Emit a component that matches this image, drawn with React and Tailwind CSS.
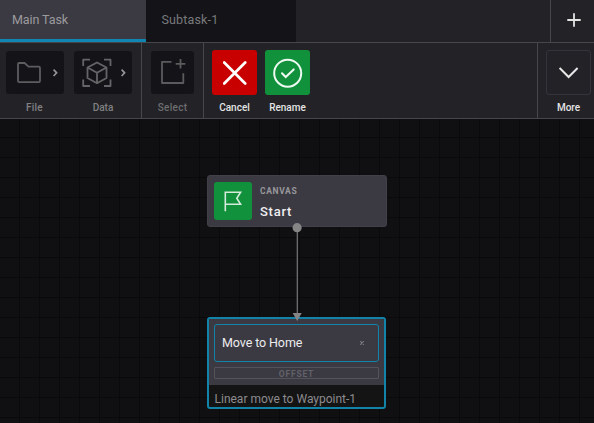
import React from "react";

function Label({ children, className = "mt-[8px]" }) {
  return <span className={`block whitespace-nowrap text-center text-[10px] leading-[12px] font-medium ${className}`}>{children}</span>;
}

function Chevron() {
  return (
    <svg width="6" height="9" viewBox="0 0 6 9" fill="none" stroke="#949497" strokeWidth="1.7">
      <path d="M.6 1.6l3 3.2L.6 8" />
    </svg>
  );
}

function FolderIcon() {
  return (
    <svg width="24" height="22" viewBox="0 0 24 22" fill="none" stroke="#5d5d60" strokeWidth="1.8" strokeLinejoin="round">
      <path d="M1 19V2.2Q1 1 2.2 1H7.6L11.5 4.7H21.8Q23 4.7 23 5.9V19Q23 20.2 21.8 20.2H2.2Q1 20.2 1 19Z" />
    </svg>
  );
}

function DataIcon() {
  return (
    <svg width="30" height="30" viewBox="0 0 30 30" fill="none" stroke="#656568" strokeWidth="1.8" strokeLinejoin="round">
      <path d="M1.2 8V1.7H8M22 1.7H28.5V8M28.5 21.5V28H22M8 28H1.2V21.5" />
      <path d="M15 4.5L24.5 9.5V20L15 25.2L5.5 20V9.5ZM5.5 9.5L15 14.8L24.5 9.5M15 14.8V25.2" />
    </svg>
  );
}

function SelectIcon() {
  return (
    <svg width="27" height="27" viewBox="0 0 27 27" fill="none" stroke="#5b5b5e" strokeWidth="1.8" strokeLinejoin="round">
      <path d="M12.5 3.9H3V25H24.3V15.2M21.5 1V10.6M16.7 5.8H26.3" />
    </svg>
  );
}

function Tabs() {
  return (
    <div className="flex h-[43px] border-b border-[#47474b] bg-[#232327] text-[12.5px] leading-[38px]">
      <div className="w-[146px] border-b-[3px] border-[#1086b3] bg-[#3b3a42] pt-[1px] pl-3 tracking-[-0.1px] text-[#9b9b9f]">Main Task</div>
      <div className="w-[150px] bg-[#141418] pt-[1px] pl-[15.5px] tracking-[0.15px] text-[#79797c]">Subtask-1</div>
      <div className="ml-auto flex w-[44px] items-center justify-center border-l border-[#47474b] pl-[3px] pb-[3px]">
        <svg width="14" height="14" viewBox="0 0 14 14" stroke="#e4e4e5" strokeWidth="1.8">
          <path d="M7 .3V13.7M.3 7H13.7" />
        </svg>
      </div>
    </div>
  );
}

function Toolbar() {
  return (
    <div className="flex h-[76px] border-b border-[#47474b] bg-[#232327]">
      <div className="flex w-[142px] gap-[10px] border-r border-[#47474b] pt-2 pl-[6px] text-[#808083]">
        <div className="w-[58px]">
          <div className="flex h-[43px] items-center rounded-[3px] bg-[#141418] pl-[10.5px]">
            <FolderIcon />
            <span className="ml-[12px]"><Chevron /></span>
          </div>
          <Label className="mt-[8px] -ml-px tracking-[0.2px]">File</Label>
        </div>
        <div className="w-[58px]">
          <div className="flex h-[43px] items-center rounded-[3px] bg-[#141418] pl-[7.5px]">
            <DataIcon />
            <span className="ml-[9px]"><Chevron /></span>
          </div>
          <Label>Data</Label>
        </div>
      </div>
      <div className="w-[62px] border-r border-[#47474b] pt-2 pl-[9px] text-[#6d6d70]">
        <div className="w-[43px]">
          <div className="flex h-[43px] items-center justify-center rounded-[3px] bg-[#141418] pb-[2px]">
            <SelectIcon />
          </div>
          <Label className="mt-[8px] tracking-[0.3px]">Select</Label>
        </div>
      </div>
      <div className="flex gap-[8px] pt-[7px] pl-[8px] text-[#e4e4e5]">
        <div className="w-[45px]">
          <div className="flex h-[45px] items-center justify-center rounded-[3px] bg-[#c90000]">
            <svg width="24" height="24" viewBox="0 0 24 24" stroke="#fff" strokeWidth="2.7" strokeLinecap="round">
              <path d="M1.2 1.5L22.2 22.5M22.2 1.5L1.2 22.5" />
            </svg>
          </div>
          <Label className="mt-[7px]">Cancel</Label>
        </div>
        <div className="w-[45px]">
          <div className="flex h-[45px] items-center justify-center rounded-[3px] bg-[#12913d]">
            <svg width="30" height="30" viewBox="0 0 30 30" fill="none" stroke="#effaf2" strokeWidth="2" strokeLinecap="round">
              <circle cx="14.7" cy="15.2" r="13.5" />
              <path d="M9 15.2L12.7 19L20.7 11.4" />
            </svg>
          </div>
          <Label className="mt-[7px]">Rename</Label>
        </div>
      </div>
      <div className="ml-auto w-[57px] border-l border-[#47474b] pt-[7px] pl-[8px] text-[#e4e4e5]">
        <div className="w-[45px]">
          <div className="flex h-[45px] items-center justify-center rounded-[3px] border border-[#35343c] pt-[1px]">
            <svg width="20" height="12" viewBox="0 0 20 12" fill="none" stroke="#e8e8e9" strokeWidth="2">
              <path d="M.6 1L9.6 10L18.6 1" />
            </svg>
          </div>
          <Label className="mt-[7px]">More</Label>
        </div>
      </div>
    </div>
  );
}

function Canvas() {
  return (
    <div className="relative flex-1 overflow-hidden bg-[#101012] bg-[linear-gradient(90deg,#0a0a0b_1px,transparent_1px),linear-gradient(#0a0a0b_1px,transparent_1px)] bg-[size:20px_20px] bg-[position:19px_18px]">
      <div className="absolute top-[56px] left-[207px] flex h-[52px] w-[180px] rounded-[3px] border border-[#42414a] bg-[#3b3a42] pt-[6px] pl-[6.4px]">
        <div className="flex h-[38px] w-[37.6px] items-center justify-center rounded-[3px] bg-[#12913d]">
          <svg width="18" height="21" viewBox="0 0 18 21" fill="none" stroke="#d2ebda" strokeWidth="1.6">
            <path d="M1.3 20.3V1.2H16.6L12.8 7.2L16.6 13.3H1.3" />
          </svg>
        </div>
        <div className="pt-[4px] pl-[8px]">
          <div className="text-[8.5px] leading-[10px] font-bold tracking-[0.65px] text-[#98979c]">CANVAS</div>
          <div className="mt-[8px] text-[13px] leading-[16px] font-medium tracking-[0.75px] text-[#efeff0]">Start</div>
        </div>
      </div>

      <div className="absolute top-[198px] left-[207px] h-[92px] w-[179px] overflow-hidden rounded-[3px] border-2 border-[#1283a9] bg-[#141415]">
        <div className="h-[66px] bg-[#3b3a42] px-[5px] pt-[5px]">
          <div className="flex h-[38px] items-center justify-between rounded-[3px] border border-[#1283a9] pr-[13px] pl-[7px] text-[12.5px] tracking-[-0.1px] text-[#ececee]">
            <span className="pt-px">Move to Home</span>
            <svg className="mr-[1px]" width="4" height="4" viewBox="0 0 4 4" stroke="#77767c" strokeWidth="1.2"><path d="M0 0L4 4M4 0L0 4" /></svg>
          </div>
          <div className="mt-[5px] flex h-[12px] items-center justify-center rounded-[1px] border border-[#54535b] pt-px text-[8.5px] leading-[10px] font-bold tracking-[0.8px] text-[#62616a]">OFFSET</div>
        </div>
        <div className="pt-[6px] pl-[5.5px] text-[12px] leading-[16px] whitespace-nowrap text-[#8c8b8e]">Linear move to Waypoint-1</div>
      </div>

      <svg className="absolute top-[104px] left-[291px]" width="12" height="99" viewBox="0 0 12 99">
        <path d="M6.3 4V92" stroke="#777779" strokeWidth="1.2" />
        <circle cx="6.1" cy="4.7" r="4.6" fill="#858586" />
        <path d="M1.7 90H10.7L6.2 98Z" fill="#858586" />
      </svg>
    </div>
  );
}

export default function App() {
  return (
    <div className="flex h-[423px] w-[594px] flex-col overflow-hidden bg-[#101012] font-[Roboto,sans-serif]">
      <Tabs />
      <Toolbar />
      <Canvas />
    </div>
  );
}
